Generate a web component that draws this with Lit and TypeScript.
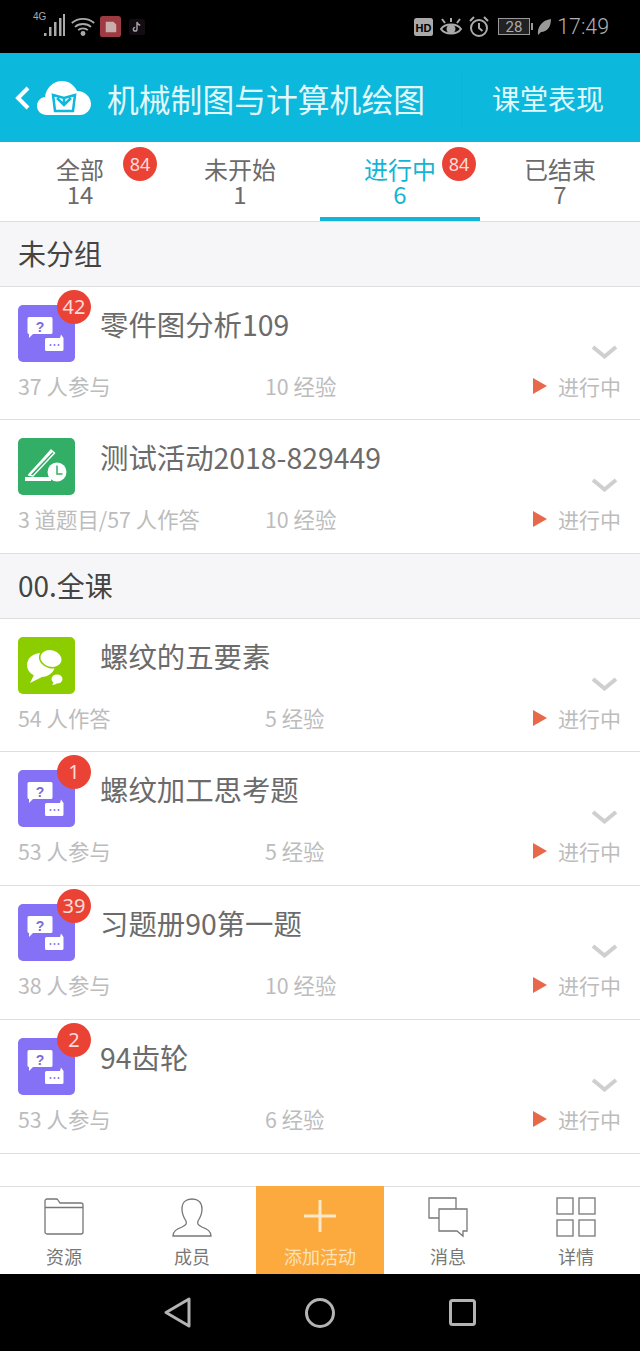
import { LitElement, html, css, svg } from "lit";
import { customElement } from "lit/decorators.js";

type Kind = "chat" | "quiz" | "talk";
interface Row { kind: Kind; badge?: string; title: string; a: string; b: string; short?: boolean; }
const G1: Row[] = [
  { kind: "chat", badge: "42", title: "零件图分析109", a: "37 人参与", b: "10 经验", short: true },
  { kind: "quiz", title: "测试活动2018-829449", a: "3 道题目/57 人作答", b: "10 经验" },
];
const G2: Row[] = [
  { kind: "talk", title: "螺纹的五要素", a: "54 人作答", b: "5 经验", short: true },
  { kind: "chat", badge: "1", title: "螺纹加工思考题", a: "53 人参与", b: "5 经验" },
  { kind: "chat", badge: "39", title: "习题册90第一题", a: "38 人参与", b: "10 经验" },
  { kind: "chat", badge: "2", title: "94齿轮", a: "53 人参与", b: "6 经验" },
];
const TABS = [
  { l: "全部", n: "14", badge: "84" },
  { l: "未开始", n: "1" },
  { l: "进行中", n: "6", badge: "84", active: true },
  { l: "已结束", n: "7" },
];

const icons: Record<Kind, unknown> = {
  chat: svg`<svg width="57" height="57" viewBox="0 0 57 57">
    <rect width="57" height="57" rx="5" fill="#8471f6"/>
    <path d="M11 12h22a1.500 1.500 0 0 1 1.500 1.500v14a1.500 1.500 0 0 1-1.500 1.500H15l-4 4v-4a1.500 1.500 0 0 1-1.500-1.500v-14A1.500 1.500 0 0 1 11 12z" fill="#fff"/>
    <text x="22" y="26.500" text-anchor="middle" font-size="14" font-weight="700" fill="#7a6ad8" font-family="Liberation Sans, sans-serif">?</text>
    <path d="M28.500 33h13.500l1-3.500 2.500 3.500v11.500a1.500 1.500 0 0 1-1.500 1.500H28.500a1.500 1.500 0 0 1-1.500-1.500V34.500a1.500 1.500 0 0 1 1.500-1.500z" fill="#fff"/>
    <circle cx="32.500" cy="40" r="1" fill="#8471f6"/><circle cx="36.500" cy="40" r="1" fill="#8471f6"/><circle cx="40.500" cy="40" r="1" fill="#8471f6"/>
  </svg>`,
  quiz: svg`<svg width="57" height="57" viewBox="0 0 57 57">
    <rect width="57" height="57" rx="5" fill="#32ae66"/>
    <path d="M11 37 L33 12 L36.500 15 L15 38 Z" fill="none" stroke="#fff" stroke-width="1.400"/>
    <path d="M11 37 L34 13" stroke="#fff" stroke-width="2.500"/>
    <rect x="7" y="39" width="26" height="4" fill="#fff"/>
    <circle cx="39" cy="34" r="9.500" fill="#fff"/>
    <path d="M39 27.500V36h5.500" fill="none" stroke="#32ae66" stroke-width="1.500"/>
  </svg>`,
  talk: svg`<svg width="57" height="57" viewBox="0 0 57 57">
    <rect width="57" height="57" rx="5" fill="#8ccd00"/>
    <ellipse cx="23" cy="28" rx="14" ry="12" fill="#fff"/>
    <path d="M17 36l-5 10 12-6z" fill="#fff"/>
    <ellipse cx="33" cy="21.500" rx="11.500" ry="9" fill="#fff" stroke="#8ccd00" stroke-width="1.500" transform="rotate(15 33 21.500)"/>
    <ellipse cx="39" cy="42" rx="5.500" ry="4.500" fill="#fff"/><path d="M36 45l-2 3 5-1z" fill="#fff"/>
  </svg>`,
};

@customElement("app-root")
export class AppRoot extends LitElement {
  static styles = css`
    :host { display: block; width: 640px; height: 1351px; overflow: hidden; background: #fff; font-family: "Noto Sans CJK SC", "Noto Sans", sans-serif; color: #666; }
    .page { display: flex; flex-direction: column; height: 1351px; }
    .status { height: 53px; flex: none; background: #000; display: flex; align-items: center; color: #a8a8a8; padding: 0 31px 0 33px; box-sizing: border-box; }
    .status .left { display: flex; align-items: center; gap: 5px; }
    .status .right { margin-left: auto; display: flex; align-items: center; gap: 7px; }
    .time { font-size: 21.300px; font-family: "Roboto", sans-serif; font-weight: 300; color: #b0b0b0; margin-left: -1px; }
    .head { height: 89px; flex: none; background: #0cb8dc; display: flex; align-items: center; color: #e2f8fd; }
    .back { margin-left: 14px; }
    .logo { margin-left: 6px; }
    .htitle { font-size: 31.800px; line-height: 40px; margin-left: 16px; width: 354px; }
    .hdiv { width: 1px; height: 58px; background: #1aaecd; }
    .hlink { font-size: 28px; margin-left: 30px; }
    .tabs { height: 79px; flex: none; display: grid; grid-template-columns: repeat(4, 160px); border-bottom: 1px solid #dedede; }
    .tab { position: relative; text-align: center; font-size: 24px; color: #6b6b6b; padding-top: 14px; box-sizing: border-box; height: 79px; }
    .tab.on { color: #14b4d6; }
    .tab.on::after { content: ""; position: absolute; left: 0; right: 0; bottom: 0; height: 4px; background: #14b4d6; }
    .tlabel { height: 25px; line-height: 25px; }
    .badge { width: 34px; height: 34px; border-radius: 50%; background: #ea4335; color: #fbdcd8; font-size: 20px; line-height: 34px; text-align: center; font-family: "Noto Sans", sans-serif; }
    .tbadge { position: absolute; top: 5px; right: 3px; font-size: 18px; }
    .tab:nth-child(3) .tbadge { right: 4px; }
    .sect { height: 64px; flex: none; background: #f6f6f8; border-bottom: 1px solid #dedede; font-size: 28px; line-height: 63px; padding-left: 18px; color: #444; }
    .row { position: relative; height: 134px; flex: none; box-sizing: border-box; padding: 18px 19px 0 18px; border-bottom: 1px solid #dedede; }
    .row.short { height: 133px; }
    .top { display: flex; align-items: flex-start; height: 57px; }
    .ic { flex: none; display: block; width: 57px; height: 57px; }
    .ic svg { display: block; }
    .title { font-size: 28.400px; line-height: 40px; margin: -1px 0 0 25px; color: #6b6b6b; flex: 1; white-space: nowrap; }
    .chev { flex: none; margin: 40px 3px 0 0; display: block; }
    .rb { position: absolute; left: 57px; top: 3px; }
    .meta { display: grid; grid-template-columns: 247px 1fr auto; margin-top: 9px; font-size: 21.400px; line-height: 30px; color: #bcbcbc; }
    .st { display: flex; align-items: center; gap: 11px; font-size: 21px; }
    .st svg { display: block; }
    .spacer { flex: 1; }
    .bar { height: 88px; flex: none; display: grid; grid-template-columns: repeat(5, 128px); border-top: 1px solid #dedede; box-sizing: border-box; }
    .it { display: flex; flex-direction: column; align-items: center; font-size: 18px; line-height: 26px; color: #777; padding-top: 10px; box-sizing: border-box; }
    .it svg { display: block; height: 41px; margin-bottom: 5px; }
    .it.add { background: #fcaa3e; color: #fde2bb; margin-top: -1px; padding-top: 11px; }
    .nav { flex: 1; background: #000; display: flex; align-items: center; }
    .nav svg { display: block; }
    .sig { margin-top: -6px; }
    .wifi { margin-left: 1px; }
    .tk { margin-left: 3px; opacity: .8; }
    .batt { margin-left: 2px; }
    .leaf { margin-left: -4px; }
  `;

  row(r: Row) {
    return html`<div class="row ${r.short ? "short" : ""}">
      <div class="top">
        <span class="ic">${icons[r.kind]}</span>
        <div class="title">${r.title}</div>
        <svg class="chev" width="27" height="14" viewBox="0 0 27 14"><path d="M2 2l11.500 9.500L25 2" fill="none" stroke="#cfcfcf" stroke-width="4"/></svg>
      </div>
      ${r.badge ? html`<div class="badge rb">${r.badge}</div>` : ""}
      <div class="meta"><span>${r.a}</span><span>${r.b}</span>
        <span class="st"><svg width="14" height="16" viewBox="0 0 14 16"><path d="M0 0l14 8-14 8z" fill="#e8694a"/></svg>进行中</span></div>
    </div>`;
  }

  render() {
    return html`<div class="page">
      <div class="status">
        <div class="left">
          <svg class="sig" width="32" height="30" viewBox="0 0 32 30">
            <text x="0" y="11" font-size="10" fill="#aaa" font-family="Liberation Sans, sans-serif">4G</text>
            <g fill="#aaa"><rect x="11" y="24" width="2.500" height="3"/><rect x="16" y="18" width="2.500" height="9"/><rect x="21" y="13" width="2.500" height="14"/><rect x="26" y="9" width="2.500" height="18"/><rect x="30" y="5" width="2" height="22"/></g>
          </svg>
          <svg class="wifi" width="24" height="20" viewBox="0 0 30 24" fill="none" stroke="#aaa" stroke-width="2.200"><path d="M1 7c8-7 20-7 28 0M5 12c5-5 15-5 20 0M9 16c3-3 9-3 12 0"/><circle cx="15" cy="20" r="2" fill="#aaa"/></svg>
          <svg width="21" height="21" viewBox="0 0 22 22"><rect width="22" height="22" rx="3" fill="#9e3a42"/><path d="M6 6h8l3 3v8H6z" fill="#c9aeae"/></svg>
          <svg class="tk" width="16" height="20" viewBox="0 0 22 22"><rect width="22" height="22" rx="3" fill="#181018"/><path d="M11 4v10a2.500 2.500 0 1 1-2.500-2.500M11 4c.5 3 2 4 4.500 4.500" fill="none" stroke="#ccc" stroke-width="2"/></svg>
        </div>
        <div class="right">
          <svg width="19" height="18" viewBox="0 0 19 18"><rect width="19" height="18" rx="2.500" fill="#aaa"/><text x="9.500" y="13.500" text-anchor="middle" font-size="11" font-weight="700" fill="#000" font-family="Liberation Sans, sans-serif">HD</text></svg>
          <svg width="22" height="20" viewBox="0 0 22 20" fill="none" stroke="#aaa" stroke-width="2"><path d="M1 12c4-6 16-6 20 0-4 6-16 6-20 0z"/><circle cx="11" cy="12" r="3.500" fill="#aaa"/><path d="M2 2l3 4M20 2l-3 4M11 1v4"/></svg>
          <svg width="20" height="21" viewBox="0 0 20 21" fill="none" stroke="#aaa" stroke-width="2"><circle cx="10" cy="12" r="8"/><path d="M10 7v5l3.500 3M1 5l4-4M19 5l-4-4"/></svg>
          <svg class="batt" width="36" height="18" viewBox="0 0 36 18"><rect x=".5" y=".5" width="31" height="16" fill="#222" stroke="#999"/><rect x="33" y="5" width="2" height="7" fill="#999"/><text x="16" y="14" text-anchor="middle" font-size="15" fill="#aaa" font-family="Roboto, sans-serif">28</text></svg>
          <svg class="leaf" width="14" height="18" viewBox="0 0 14 18"><path d="M1 17C0 9 5 2 14 1c0 8-4 13-10 13z" fill="#999"/></svg>
          <span class="time">17:49</span>
        </div>
      </div>
      <div class="head">
        <svg class="back" width="17" height="24" viewBox="0 0 17 24"><path d="M14 2L4 12l10 10" fill="none" stroke="#fff" stroke-width="4"/></svg>
        <svg class="logo" width="54" height="36" viewBox="0 0 54 36"><path d="M10 35C4 35 0 31 0 26c0-5 4-9 8-9 1-9 8-16 17-16 7 0 12 4 15 10 8 0 14 6 14 13 0 6-5 11-11 11z" fill="#fff"/><path d="M16 15l11 3 11-3-2 16H18zM27 18v7M20 18l7 7 7-7" fill="none" stroke="#0cb8dc" stroke-width="2.500"/></svg>
        <div class="htitle">机械制图与计算机绘图</div>
        <div class="hdiv"></div>
        <div class="hlink">课堂表现</div>
      </div>
      <div class="tabs">
        ${TABS.map((t) => html`<div class="tab ${t.active ? "on" : ""}">
          <div class="tlabel">${t.l}</div><div class="tlabel">${t.n}</div>
          ${t.badge ? html`<div class="badge tbadge">${t.badge}</div>` : ""}
        </div>`)}
      </div>
      <div class="sect">未分组</div>
      ${G1.map((r) => this.row(r))}
      <div class="sect">00.全课</div>
      ${G2.map((r) => this.row(r))}
      <div class="spacer"></div>
      <div class="bar">
        <div class="it"><svg width="40" height="41" viewBox="0 0 40 41" fill="none" stroke="#777" stroke-width="1.300"><path d="M1 8V4a2 2 0 0 1 2-2h9a2 2 0 0 1 2 1l2 3h21a2 2 0 0 1 2 2v27a2 2 0 0 1-2 2H3a2 2 0 0 1-2-2zM1 10.500h38"/></svg>资源</div>
        <div class="it"><svg width="40" height="41" viewBox="0 0 40 41" fill="none" stroke="#777" stroke-width="1.300"><path d="M1 39c0-5 4-7 9-9 4-2 5-3 4-6-2-3-4-7-4-12 0-7 4-10 10-10s10 3 10 10c0 5-2 9-4 12-1 3 0 4 4 6 5 2 9 4 9 9z"/></svg>成员</div>
        <div class="it add"><svg width="34" height="41" viewBox="0 0 34 41" fill="none" stroke="#fde8c8" stroke-width="3"><path d="M17 3v32M1 19h32"/></svg>添加活动</div>
        <div class="it"><svg width="40" height="41" viewBox="0 0 40 41" fill="none" stroke="#777" stroke-width="1.300"><path d="M28 12V1H1v20h10"/><path d="M11 12h28v22h-4v5l-6-5H11z"/></svg>消息</div>
        <div class="it"><svg width="40" height="41" viewBox="0 0 40 41" fill="none" stroke="#777" stroke-width="1.300"><rect x="1" y="1" width="16" height="16"/><rect x="23" y="1" width="16" height="16"/><rect x="1" y="23" width="16" height="16"/><rect x="23" y="23" width="16" height="16"/></svg>详情</div>
      </div>
      <div class="nav">
        <svg width="640" height="77" viewBox="0 0 640 77" fill="none" stroke="#b4b4b4" stroke-width="3" stroke-linejoin="round">
          <path d="M189 25v27l-23-13.500z"/><circle cx="320" cy="39" r="13.500"/><rect x="450.500" y="26.500" width="24" height="24" rx="2"/>
        </svg>
      </div>
    </div>`;
  }
}
